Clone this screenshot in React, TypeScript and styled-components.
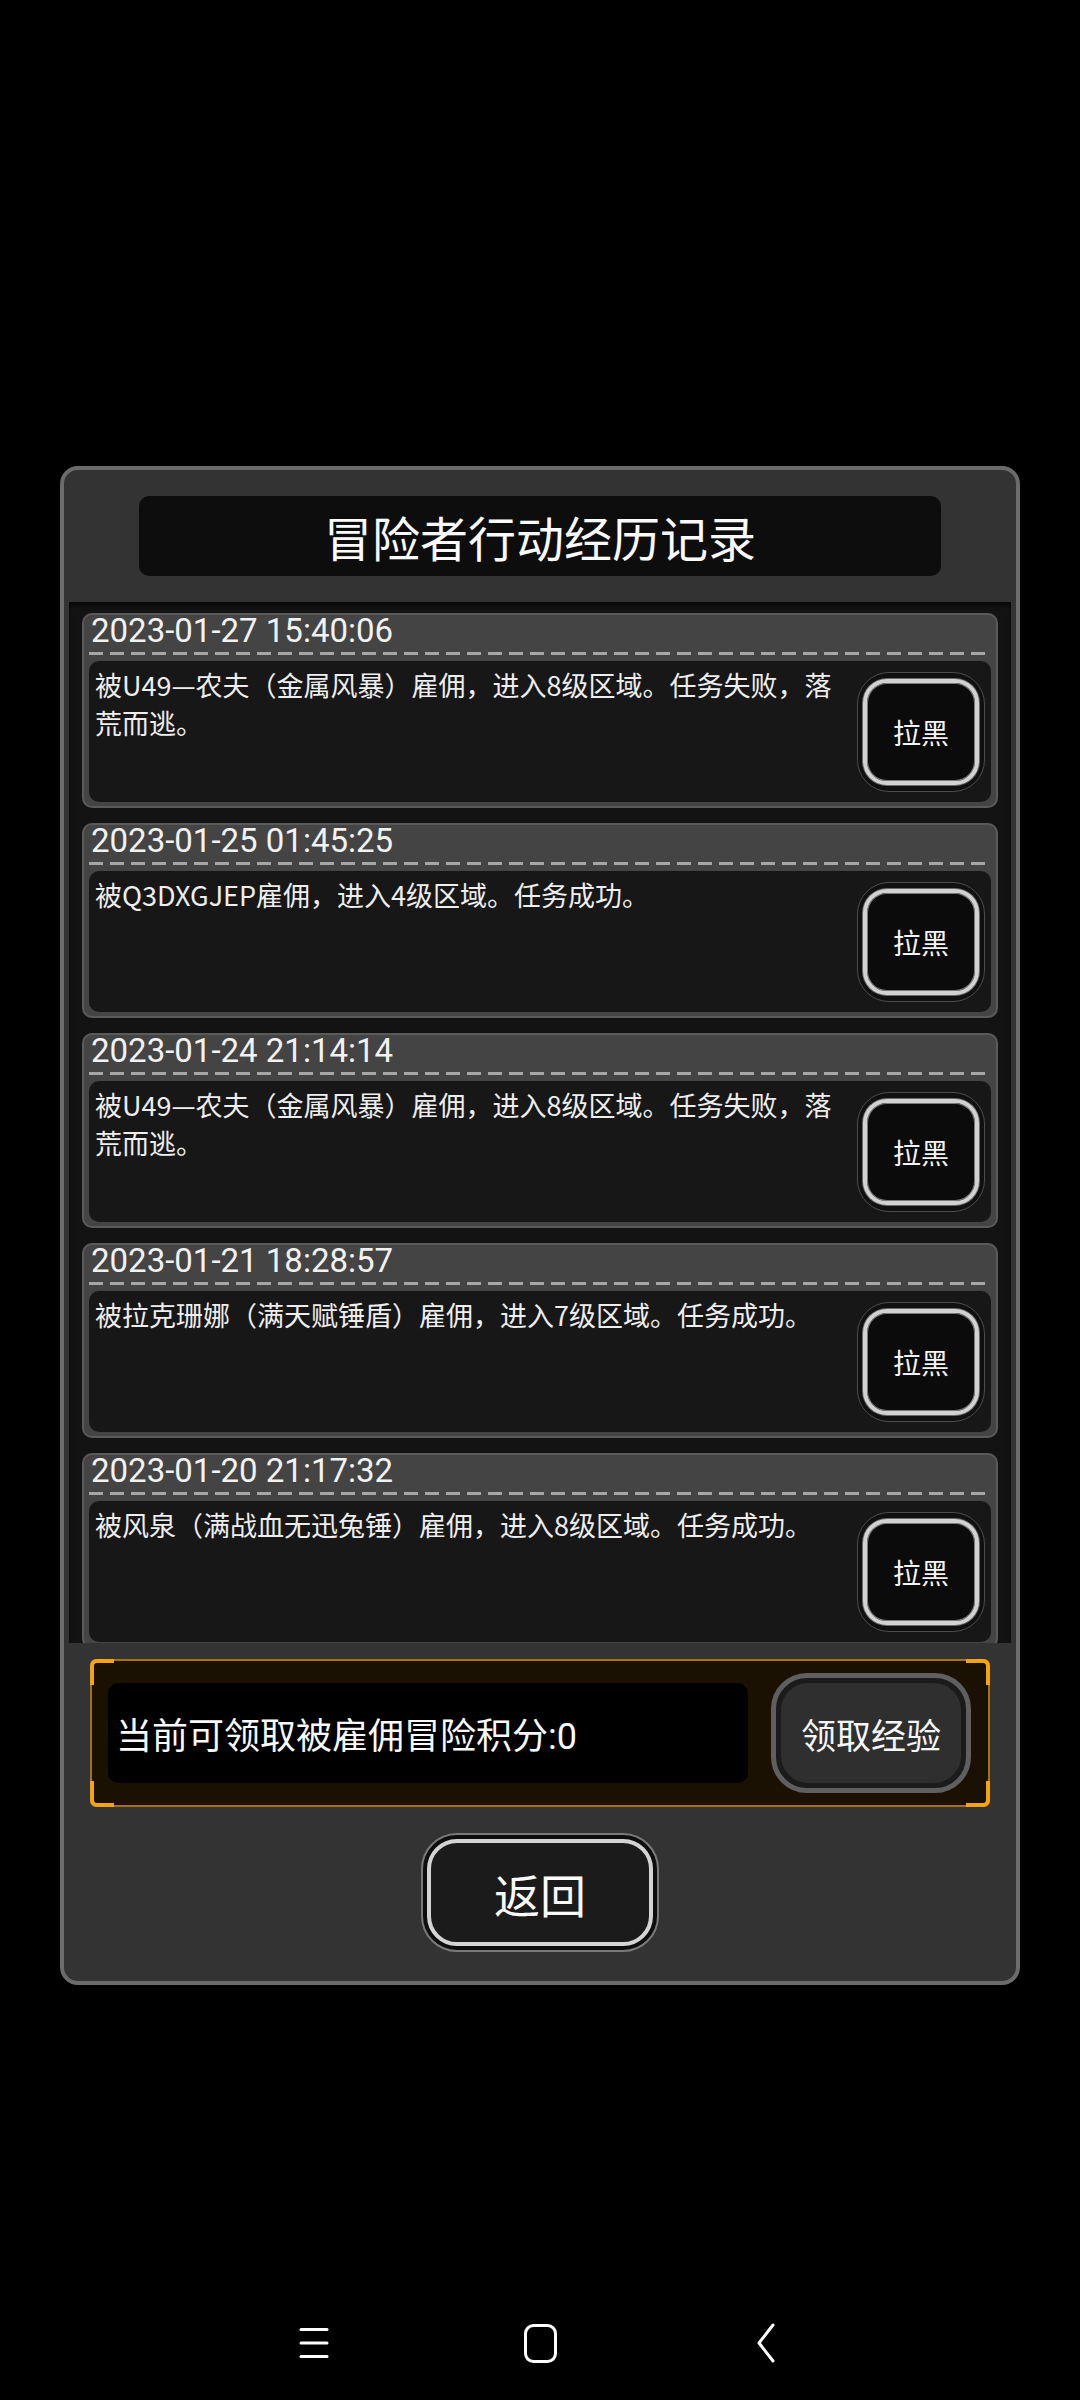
import React from "react";
import styled, { createGlobalStyle } from "styled-components";

const GlobalStyle = createGlobalStyle`
  html, body {
    margin: 0;
    padding: 0;
    background: #000;
  }
  body {
    font-family: Roboto, "Noto Sans CJK SC", sans-serif;
    color: #fff;
  }
  * {
    box-sizing: border-box;
  }
`;

type LogItem = {
  time: string;
  text: string;
};

const logs: LogItem[] = [
  {
    time: "2023-01-27 15:40:06",
    text: "被U49—农夫（金属风暴）雇佣，进入8级区域。任务失败，落荒而逃。",
  },
  {
    time: "2023-01-25 01:45:25",
    text: "被Q3DXGJEP雇佣，进入4级区域。任务成功。",
  },
  {
    time: "2023-01-24 21:14:14",
    text: "被U49—农夫（金属风暴）雇佣，进入8级区域。任务失败，落荒而逃。",
  },
  {
    time: "2023-01-21 18:28:57",
    text: "被拉克珊娜（满天赋锤盾）雇佣，进入7级区域。任务成功。",
  },
  {
    time: "2023-01-20 21:17:32",
    text: "被风泉（满战血无迅兔锤）雇佣，进入8级区域。任务成功。",
  },
];

const App = () => {
  return (
    <Screen>
      <GlobalStyle />
      <Panel>
        <Title>冒险者行动经历记录</Title>

        <LogList>
          {logs.map((item, i) => (
            <Card key={i}>
              <Time>{item.time}</Time>
              <Dash />
              <Body>
                <BodyText>{item.text}</BodyText>
                <BlockRing>
                  <BlockButton>拉黑</BlockButton>
                </BlockRing>
              </Body>
            </Card>
          ))}
        </LogList>

        <Frame>
          <Corner $v="top" $h="left" />
          <Corner $v="top" $h="right" />
          <Corner $v="bottom" $h="left" />
          <Corner $v="bottom" $h="right" />
          <ScoreBox>当前可领取被雇佣冒险积分:0</ScoreBox>
          <ClaimButton>
            <ClaimInner>领取经验</ClaimInner>
          </ClaimButton>
        </Frame>

        <BackButton>
          <BackInner>返回</BackInner>
        </BackButton>
      </Panel>

      <NavBar>
        <svg width="30" height="32" viewBox="0 0 30 32">
          <g stroke="#fff" strokeWidth="3" strokeLinecap="round">
            <line x1="2" y1="2.5" x2="28" y2="2.5" />
            <line x1="2" y1="16" x2="28" y2="16" />
            <line x1="2" y1="29.5" x2="28" y2="29.5" />
          </g>
        </svg>
        <svg width="33" height="39" viewBox="0 0 33 39">
          <rect
            x="1.5"
            y="1.5"
            width="30"
            height="36"
            rx="8"
            fill="none"
            stroke="#fff"
            strokeWidth="3"
          />
        </svg>
        <svg width="20" height="40" viewBox="0 0 20 40">
          <polyline
            points="17,2 3,20 17,38"
            fill="none"
            stroke="#fff"
            strokeWidth="3"
            strokeLinecap="round"
            strokeLinejoin="round"
          />
        </svg>
      </NavBar>
    </Screen>
  );
};

export default App;

const Screen = styled.div`
  width: 1080px;
  height: 2400px;
  padding-top: 466px;
  display: flex;
  flex-direction: column;
  align-items: center;
  background: #000;
  overflow: hidden;
`;

const Panel = styled.div`
  width: 960px;
  border: 4px solid #6b6b6b;
  border-radius: 18px;
  background: #333333;
  padding: 26px 5px 29px;
  display: flex;
  flex-direction: column;
  align-items: center;
`;

const Title = styled.div`
  width: 802px;
  height: 80px;
  border-radius: 10px;
  background: #0d0d0d;
  display: flex;
  align-items: center;
  justify-content: center;
  font-size: 48px;
  color: #fafafa;
`;

const LogList = styled.div`
  align-self: stretch;
  margin-top: 26px;
  height: 1041px;
  background: #131313;
  overflow: hidden;
  padding: 11px 13px 0;
  display: flex;
  flex-direction: column;
  gap: 15px;
  box-shadow: inset 0 3px 4px rgba(0, 0, 0, 0.6);
`;

const Card = styled.div`
  flex-shrink: 0;
  height: 195px;
  border: 2px solid #5a5a5a;
  border-radius: 10px;
  background: #444444;
  padding: 0 5px 4px;
  display: flex;
  flex-direction: column;
`;

const Time = styled.div`
  height: 32px;
  line-height: 32px;
  padding-left: 2px;
  font-size: 33px;
  color: #f2f2f2;
`;

const Dash = styled.div`
  margin-top: 5px;
  height: 3px;
  background: repeating-linear-gradient(
    to right,
    #a6a6a6 0,
    #a6a6a6 14px,
    transparent 14px,
    transparent 21px
  );
`;

const Body = styled.div`
  margin-top: 6px;
  flex: 1;
  border-radius: 10px;
  background: #171717;
  padding: 5px 6px;
  display: flex;
  align-items: center;
`;

const BodyText = styled.div`
  align-self: flex-start;
  width: 745px;
  font-family: "Noto Sans CJK SC", Roboto, sans-serif;
  font-size: 27px;
  line-height: 38px;
  color: #eeeeee;
`;

const BlockRing = styled.div`
  margin-left: auto;
  width: 128px;
  height: 120px;
  border: 1.5px solid #4d4d4d;
  border-radius: 32px;
  background: #101010;
  padding: 6px 5px;
`;

const BlockButton = styled.div`
  width: 100%;
  height: 100%;
  border: 4px solid #d2d2d2;
  border-radius: 24px;
  background: #0b0b0b;
  box-shadow: inset 0 0 0 1px #7a7a7a, 0 0 0 1px #6a6a6a;
  display: flex;
  align-items: center;
  justify-content: center;
  font-size: 28px;
  color: #f4f4f4;
`;

const Frame = styled.div`
  position: relative;
  width: 900px;
  height: 148px;
  margin-top: 16px;
  border: 2px solid #a8700f;
  border-radius: 6px;
  background: #1b1103;
  padding: 0 17px 0 16px;
  display: flex;
  align-items: center;
  justify-content: space-between;
`;

const Corner = styled.span<{ $v: "top" | "bottom"; $h: "left" | "right" }>`
  position: absolute;
  width: 24px;
  height: 26px;
  border: 0 solid #f4a312;
  ${(p) => p.$v}: -2px;
  ${(p) => p.$h}: -2px;
  border-${(p) => p.$v}-width: 4px;
  border-${(p) => p.$h}-width: 4px;
  border-${(p) => p.$v}-${(p) => p.$h}-radius: 7px;
`;

const ScoreBox = styled.div`
  width: 640px;
  height: 100px;
  border-radius: 10px;
  background: #000;
  padding-left: 8px;
  display: flex;
  align-items: center;
  font-size: 36px;
  color: #fafafa;
`;

const ClaimButton = styled.div`
  width: 200px;
  height: 120px;
  border: 5px solid #5f5f5f;
  border-radius: 36px;
  background: #1b1b1b;
  padding: 5px;
`;

const ClaimInner = styled.div`
  width: 100%;
  height: 100%;
  border-radius: 27px;
  background: #2f2f2f;
  display: flex;
  align-items: center;
  justify-content: center;
  font-size: 35px;
  color: #f6f6f6;
`;

const BackButton = styled.div`
  width: 238px;
  height: 119px;
  margin-top: 26px;
  border: 2px solid #7a7a7a;
  border-radius: 36px;
  background: #0e0e0e;
  padding: 4px;
`;

const BackInner = styled.div`
  width: 100%;
  height: 100%;
  border: 4px solid #d4d4d4;
  border-radius: 30px;
  background: #1b1b1b;
  display: flex;
  align-items: center;
  justify-content: center;
  font-size: 46px;
  color: #fafafa;
`;

const NavBar = styled.div`
  margin-top: auto;
  width: 100%;
  height: 114px;
  display: grid;
  grid-template-columns: repeat(3, 226px);
  justify-content: center;
  justify-items: center;
  align-items: center;
`;
